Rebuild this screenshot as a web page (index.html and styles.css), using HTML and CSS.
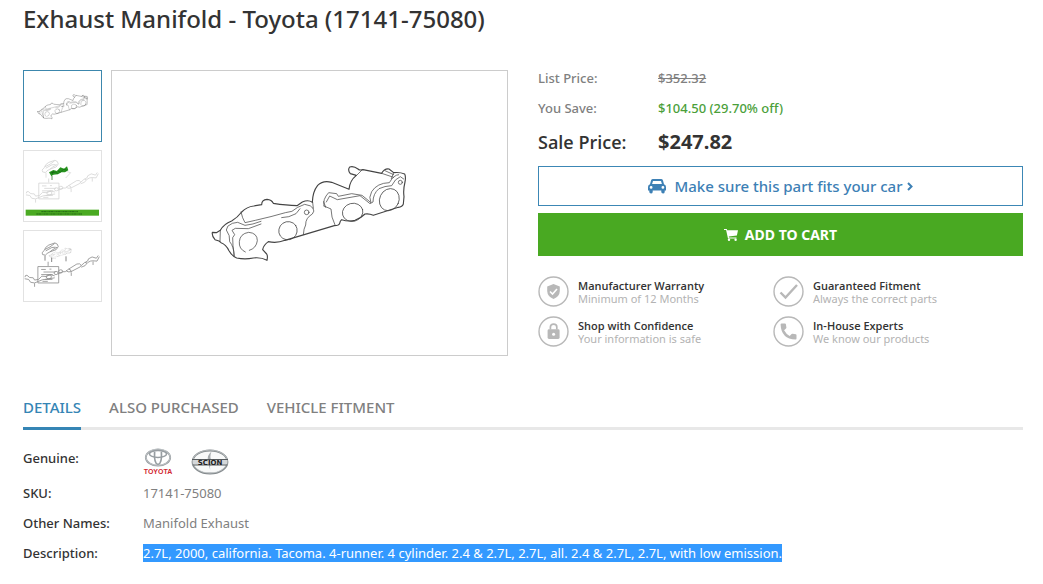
FILE: index.html
```html
<!DOCTYPE html>
<html lang="en">
<head>
<meta charset="utf-8">
<meta name="viewport" content="width=device-width, initial-scale=1">
<title>Exhaust Manifold - Toyota (17141-75080)</title>
<link rel="stylesheet" href="styles.css">
</head>
<body>
<svg class="defs" aria-hidden="true">
  <symbol id="manifold" viewBox="0 0 630 315">
    <g fill="none" stroke="currentColor" stroke-linejoin="round" stroke-linecap="round">
      <path stroke-width="3.4" d="M22 217 L34 218 L46 211 Q56 192 80 183 Q98 172 110 156 Q126 140 146 138 L170 134 Q170 119 186 118 Q200 119 205 130 Q245 136 276 137 L292 126 Q310 118 322 127 Q323 95 338 76 Q354 60 380 67 L432 88 Q434 62 454 46 L436 41 Q427 30 434 21 Q446 17 459 27 Q464 32 474 29 L530 40 Q538 25 552 27 L566 38 Q585 36 599 42 Q603 50 600 66 Q594 90 597 110 L595 132 Q592 141 580 142 L505 166 Q492 160 480 162 Q468 174 450 181 Q430 186 410 179 Q405 183 404 190 Q402 197 388 197 L240 241 Q215 251 190 245 Q175 256 173 269 L185 282 Q189 288 186 301 Q168 291 145 294 Q120 299 95 294 Q82 289 72 272 Q63 253 48 248 L42 243 L30 239 Q20 228 22 217 Z"/>
      <path stroke-width="2.2" d="M46 211 L45 244 M108 156 Q112 175 120 188 L151 181 Q200 170 241 158 Q262 158 278 142 L299 133 Q320 136 324 145 Q330 153 322 162 Q301 174 302 195 Q296 205 295 224 M323 127 L325 145 M87 286 Q87 260 74 245 Q76 226 64 210 Q64 197 82 190 L98 187 L120 196 Q143 194 168 184 M88 288 L84 257 L83 233 L89 224 L81 211 L91 205 L130 206 L168 192 M230 173 Q252 173 273 161 L285 146 M357 138 Q352 118 371 98 L395 101 L400 109 L440 101 L471 106 L498 128 Q490 112 500 95 Q516 69 553 68 Q567 44 581 44 M362 142 L356 125 M364 126 L374 108 L397 119 L465 107 L495 131 L504 126 Q504 101 522 86 Q539 78 560 77 Q570 56 586 50 L596 57 M357 138 L378 147 Q378 171 390 195 M530 40 L566 52 M566 38 L559 56 M540 32 L566 44 M472 29 L454 47"/>
      <path stroke-width="2.2" d="M121 276 Q101 267 103 245 Q105 221 131 217 Q157 219 157 242 Q154 265 133 271"/>
      <ellipse stroke-width="2.2" cx="249" cy="212" rx="28" ry="27" transform="rotate(-35 249 212)"/>
      <ellipse stroke-width="2.2" cx="443" cy="157" rx="31" ry="27" transform="rotate(-15 443 157)"/>
      <ellipse stroke-width="2.2" cx="553" cy="119" rx="29" ry="34" transform="rotate(25 553 119)"/>
      <circle stroke-width="2.2" cx="305" cy="157" r="7"/>
      <circle stroke-width="2.2" cx="586" cy="67" r="6"/>
    </g>
  </symbol>
  <symbol id="shield-part" viewBox="0 0 80 50">
    <path fill="none" stroke="currentColor" stroke-width="2.6" d="M2 35 L9 28 Q12 16 24 10 L44 3 Q54 5 55 15 L48 25 L28 32 Q17 37 13 43 L4 41 Z M14 29 L34 18 L46 17 M12 24 L28 16 L43 5 M28 32 L37 25 L51 17"/>
  </symbol>
  <symbol id="pipes" viewBox="0 0 231 108" preserveAspectRatio="none">
    <g fill="none" stroke="currentColor" stroke-width="2.4">
      <path d="M4 68 Q4 61 10 62 L18 69 L29 70 L33 77 L45 75 L55 65 L69 66 L80 60 L94 64 M3 73 L15 75 L21 84 L33 86 L45 81 L57 76 L72 74 L94 70"/>
      <path d="M43 35 H106 V86 H43 Z M53 44 H67 M78 43 H84 M60 52 H96 M53 60 H88 M65 75 H87 M57 81 H73"/>
      <ellipse cx="76" cy="67" rx="8" ry="6"/>
      <ellipse cx="98" cy="55" rx="6" ry="5"/>
      <ellipse cx="112" cy="50" rx="6" ry="5"/>
      <path d="M104 58 L118 51 L126 51 L136 43 L161 27 Q171 24 174 31 L171 36 L143 51 Q133 54 128 47 M136 43 Q145 44 143 51 M174 32 L185 22 L192 24 L186 32 L174 37 M186 22 Q197 18 196 11 L207 5 L220 9 L226 0 M193 23 L202 18 L209 17 L222 18 L229 4 M74 20 V33 M33 87 V98 M144 53 V64 M210 19 V30"/>
    </g>
  </symbol>
</svg>

<main class="page">
  <h1 class="title">Exhaust Manifold - Toyota (17141-75080)</h1>

  <div class="product">
    <section class="gallery" aria-label="Product images">
      <div class="thumbs">
        <button class="thumb thumb-active" type="button" aria-label="Manifold">
          <svg class="thumb-part" aria-hidden="true"><use href="#manifold"/></svg>
        </button>
        <button class="thumb" type="button" aria-label="Highlighted diagram">
          <svg class="thumb-art" viewBox="25 22 231 210" aria-hidden="true">
            <g color="#d2d2d2"><use href="#shield-part" x="77" y="47" width="74" height="46"/><use href="#pipes" x="28" y="86" width="222" height="100"/></g>
            <path fill="#27941f" d="M100 86 L113 79 L124 82 L134 71 L145 75 L154 68 L158 80 L148 86 L137 86 L127 92 L113 93 L107 98 Z"/>
            <path fill="none" stroke="#145f12" stroke-width="2" d="M105 88 L119 85 L126 90 M126 81 L134 86 L144 76 L153 80 M112 92 L109 86 L115 83 M109 97 V109"/>
            <path fill="none" stroke="#d2d2d2" stroke-width="2" d="M154 84 L165 87 L150 103 M91 87 V102"/>
            <rect x="30" y="198" width="220" height="18" fill="#4aaa22"/>
            <path stroke="#256b15" stroke-width="3" stroke-dasharray="5 1 9 1 3 2" d="M77 204 H188 M62 211 H199"/>
          </svg>
        </button>
        <button class="thumb" type="button" aria-label="Full diagram">
          <svg class="thumb-art" viewBox="25 22 231 210" aria-hidden="true">
            <g color="#888888"><use href="#shield-part" x="77" y="55" width="74" height="46"/><use href="#pipes" x="24" y="95" width="229" height="104"/></g>
            <g color="#666666"><use href="#manifold" x="98" y="70" width="72" height="38"/></g>
            <path stroke="#888888" stroke-width="3" d="M88 96 V111 M108 102 V115 M151 98 V113"/>
          </svg>
        </button>
      </div>
      <div class="stage">
        <svg class="stage-art" role="img" aria-label="Exhaust manifold line drawing"><use href="#manifold"/></svg>
      </div>
    </section>

    <section class="buy" aria-label="Purchase">
      <dl class="prices">
        <div class="price-row"><dt>List Price:</dt><dd><s>$352.32</s></dd></div>
        <div class="price-row"><dt>You Save:</dt><dd class="save">$104.50 (29.70% off)</dd></div>
        <div class="price-row sale"><dt>Sale Price:</dt><dd>$247.82</dd></div>
      </dl>
      <button class="fit-button" type="button">
        <svg class="car" viewBox="0 0 18 15" aria-hidden="true"><path fill="currentColor" fill-rule="evenodd" d="M5 0 H13 Q14.5 0 15 1.4 L16 5.2 Q18 5.7 18 8 V11.5 H16.7 V13 Q16.5 14.5 15 14.5 Q13.4 14.4 13.3 13 V11.5 H4.7 V13 Q4.5 14.5 3 14.5 Q1.4 14.4 1.3 13 V11.5 H0 V8 Q0 5.7 2 5.2 L3 1.4 Q3.5 0 5 0 Z M5 2 L4.1 5.1 H13.9 L13 2 Z M3.1 7 A1.4 1.4 0 1 0 3.1 9.8 A1.4 1.4 0 1 0 3.1 7 Z M14.9 7 A1.4 1.4 0 1 0 14.9 9.8 A1.4 1.4 0 1 0 14.9 7 Z"/></svg>
        <span>Make sure this part fits your car</span>
        <svg class="chevron" viewBox="0 0 6 9" aria-hidden="true"><path fill="none" stroke="currentColor" stroke-width="2" d="M1 1 L4.5 4.5 L1 8"/></svg>
      </button>
      <button class="cart-button" type="button">
        <svg class="cart" viewBox="0 0 14 12" aria-hidden="true"><path fill="currentColor" d="M0 0 H2.8 L3.2 1.3 H14 L12.9 6.5 L4.8 7.4 L5 8.4 H12.5 V9.4 H4 L2.1 1 H0 Z"/><circle cx="5" cy="10.7" r="1.2" fill="currentColor"/><circle cx="11.6" cy="10.7" r="1.2" fill="currentColor"/></svg>
        <span>ADD TO CART</span>
      </button>
      <ul class="badges">
        <li class="badge">
          <svg class="badge-icon" viewBox="0 0 31 31" aria-hidden="true"><circle class="ring" cx="15.5" cy="15.5" r="14.5"/><path fill="currentColor" d="M15.5 8 L21.8 10.4 V15 Q21.6 20.6 15.5 23 Q9.4 20.6 9.2 15 V10.4 Z"/><path fill="none" stroke="#fff" stroke-width="1.6" d="M12 15.5 L14.5 18 L19 13"/></svg>
          <p class="badge-text"><strong>Manufacturer Warranty</strong><span>Minimum of 12 Months</span></p>
        </li>
        <li class="badge">
          <svg class="badge-icon" viewBox="0 0 31 31" aria-hidden="true"><circle class="ring" cx="15.5" cy="15.5" r="14.5"/><path fill="none" stroke="currentColor" stroke-width="2.4" d="M7.5 16.5 L12.5 21.5 L24 9"/></svg>
          <p class="badge-text"><strong>Guaranteed Fitment</strong><span>Always the correct parts</span></p>
        </li>
        <li class="badge">
          <svg class="badge-icon" viewBox="0 0 31 31" aria-hidden="true"><circle class="ring" cx="15.5" cy="15.5" r="14.5"/><rect x="9.6" y="13.3" width="12" height="9.7" rx="1.4" fill="currentColor"/><path fill="none" stroke="currentColor" stroke-width="1.7" d="M12.4 13.5 V11 Q12.4 8.2 15.6 8.2 Q18.8 8.2 18.8 11 V13.5"/><circle cx="15.6" cy="18.2" r="1.5" fill="#fff"/></svg>
          <p class="badge-text"><strong>Shop with Confidence</strong><span>Your information is safe</span></p>
        </li>
        <li class="badge">
          <svg class="badge-icon" viewBox="0 0 31 31" aria-hidden="true"><circle class="ring" cx="15.5" cy="15.5" r="14.5"/><path fill="currentColor" d="M8.6 7.5 H12 Q12.8 7.5 12.9 8.2 L13.4 11.4 Q13.5 12 13 12.4 L11.1 14.3 Q13 18 16.7 20 L18.6 18.1 Q19 17.7 19.6 17.8 L22.8 18.3 Q23.5 18.4 23.5 19.2 V22.6 Q23.5 23.5 22.6 23.5 Q8.2 22.9 7.6 8.4 Q7.6 7.5 8.6 7.5 Z"/></svg>
          <p class="badge-text"><strong>In-House Experts</strong><span>We know our products</span></p>
        </li>
      </ul>
    </section>
  </div>

  <nav class="tabs" aria-label="Product information">
    <a class="tab tab-active" href="#details" aria-current="true">DETAILS</a>
    <a class="tab" href="#purchased">ALSO PURCHASED</a>
    <a class="tab" href="#fitment">VEHICLE FITMENT</a>
  </nav>

  <dl class="details" id="details">
    <div class="detail-row">
      <dt>Genuine:</dt>
      <dd class="brands">
        <svg class="toyota" viewBox="0 0 30 27" role="img" aria-label="Toyota">
          <g fill="none" stroke="#979da1"><ellipse cx="15" cy="9.5" rx="12.2" ry="8.2" stroke-width="1.8"/><path stroke-width="1.7" d="M11.6 3.6 Q10.8 15.6 15 16.6 Q19.2 15.6 18.4 3.6"/><ellipse cx="15" cy="6" rx="8.5" ry="3.4" stroke-width="1.5"/></g>
          <ellipse cx="15" cy="9.2" rx="12.2" ry="8.2" fill="none" stroke="#d5d8da" stroke-width="0.6"/>
          <text class="toyota-word" x="15" y="26" text-anchor="middle">TOYOTA</text>
        </svg>
        <svg class="scion" viewBox="0 0 38 26" role="img" aria-label="Scion">
          <ellipse cx="19" cy="13" rx="17.5" ry="11.5" fill="#f8f9f9" stroke="#858b8e" stroke-width="1.8"/>
          <ellipse cx="19" cy="12.6" rx="17.5" ry="11.5" fill="none" stroke="#c6cacc" stroke-width="0.7"/>
          <path fill="#a5aaad" d="M20.5 2.5 Q16 6 16.8 12 L20 24 Q17.6 17 21 13 Q18 8 20.5 2.5 Z"/>
          <path fill="#d4d7d9" d="M2 10.6 H36 V15.6 H2 Z"/>
          <path stroke="#555a5d" stroke-width="1" d="M1 10.5 H37 M2 16 H36"/>
          <text class="scion-word" x="19" y="15.6" text-anchor="middle">SCION</text>
        </svg>
      </dd>
    </div>
    <div class="detail-row"><dt>SKU:</dt><dd>17141-75080</dd></div>
    <div class="detail-row"><dt>Other Names:</dt><dd>Manifold Exhaust</dd></div>
    <div class="detail-row"><dt>Description:</dt><dd><span class="selected">2.7L, 2000, california. Tacoma. 4-runner. 4 cylinder. 2.4 &amp; 2.7L, 2.7L, all. 2.4 &amp; 2.7L, 2.7L, with low emission.</span></dd></div>
  </dl>
</main>
</body>
</html>
```
FILE: styles.css
```css
* { box-sizing: border-box; }

body {
  margin: 0;
  background: #fff;
  color: #333;
  font-family: "Noto Sans", "Open Sans", sans-serif;
  font-size: 13px;
  line-height: 20px;
}

h1, dl, dd, ul, p { margin: 0; padding: 0; }
button { font: inherit; cursor: pointer; }
svg { display: block; }
.defs { position: absolute; width: 0; height: 0; }

.page { padding: 3px 20px 12px 23px; }

.title {
  font-size: 24px;
  font-weight: 500;
  line-height: 32px;
  margin-bottom: 35px;
}

.product {
  display: grid;
  grid-template-columns: 1fr 1fr;
  gap: 30px;
}

.gallery { display: flex; gap: 9px; }
.thumbs { display: flex; flex-direction: column; gap: 8px; }

.thumb {
  display: flex;
  align-items: center;
  justify-content: center;
  width: 79px;
  height: 72px;
  padding: 0;
  border: 1px solid #e2e2e2;
  background: #fff;
}
.thumb-active { border-color: #3c87ad; }
.thumb-part { width: 54px; height: 27px; color: #222; }
.thumb-art { width: 100%; height: 100%; }

.stage {
  flex: 1;
  display: flex;
  align-items: center;
  justify-content: center;
  height: 286px;
  padding-bottom: 2px;
  border: 1px solid #ccc;
}
.stage-art { width: 210px; height: 105px; color: #444; }

.price-row {
  display: grid;
  grid-template-columns: 120px 1fr;
  color: #808080;
  font-weight: 500;
  line-height: 16px;
  margin-bottom: 14px;
}
.price-row .save { color: #4b9f3a; }
.price-row.sale {
  align-items: center;
  color: #333;
  font-size: 18px;
  line-height: 24px;
  margin: 0 0 12px;
}
.sale dt { font-family: "Open Sans", "Noto Sans", sans-serif; font-weight: 600; }
.sale dd { font-size: 20px; font-weight: 700; }

.fit-button,
.cart-button {
  display: flex;
  align-items: center;
  justify-content: center;
  width: 100%;
  padding: 0;
}
.fit-button {
  height: 40px;
  border: 1px solid #3c87b5;
  background: #fff;
  color: #3d80b5;
  font-size: 15px;
  font-weight: 500;
}
.car { width: 18px; height: 15px; margin-right: 8px; }
.chevron { width: 6px; height: 9px; margin-left: 4px; }
.cart-button {
  height: 43px;
  margin-top: 7px;
  border: 0;
  background: #49a922;
  color: #fff;
  font-size: 14px;
  font-weight: 700;
}
.cart { width: 14px; height: 12px; margin-right: 7px; }

.badges {
  display: grid;
  grid-template-columns: 235px 1fr;
  row-gap: 9px;
  margin-top: 20px;
  list-style: none;
}
.badge { display: flex; align-items: center; gap: 9px; }
.badge-icon { width: 31px; height: 31px; color: #b8b8b8; }
.ring { fill: none; stroke: currentColor; stroke-width: 1.4; }
.badge-text { font-size: 11px; line-height: 13px; }
.badge-text strong {
  display: block;
  font-family: "Open Sans", "Noto Sans", sans-serif;
  font-weight: 600;
}
.badge-text span { display: block; color: #b3b3b3; }

.tabs {
  display: flex;
  gap: 28px;
  margin-top: 41px;
  border-bottom: 3px solid #e8e8e8;
}
.tab {
  margin-bottom: -3px;
  padding-bottom: 10px;
  border-bottom: 3px solid transparent;
  color: #808080;
  font-size: 15px;
  font-weight: 500;
  text-decoration: none;
}
.tab-active { color: #3585b5; border-color: #3585b5; }

.details { padding-top: 18px; }
.detail-row {
  display: grid;
  grid-template-columns: 120px 1fr;
  margin-bottom: 10px;
}
.detail-row dt { font-weight: 500; }
.detail-row dd { color: #808080; }
.detail-row .brands { display: flex; align-items: flex-start; gap: 18px; height: 25px; }
.toyota { width: 30px; height: 27px; }
.scion { width: 38px; height: 26px; margin-top: 1px; }
.toyota-word { fill: #d22832; font: 700 7px "Liberation Sans", sans-serif; }
.scion-word { fill: #222; font: 700 7px "DejaVu Sans", sans-serif; }
.selected { background: #3399ff; color: #fff; }
```
